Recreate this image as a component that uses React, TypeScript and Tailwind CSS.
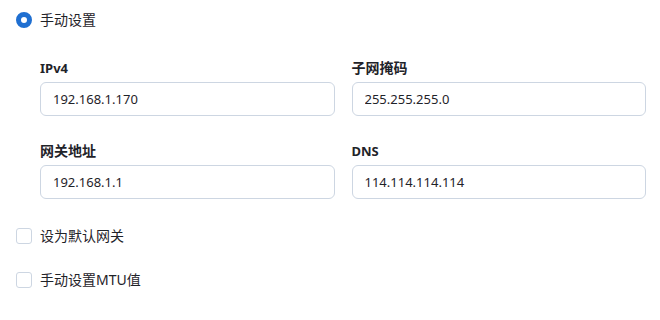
const fields = [
  [
    { label: 'IPv4', value: '192.168.1.170', latin: true },
    { label: '子网掩码', value: '255.255.255.0', latin: false },
  ],
  [
    { label: '网关地址', value: '192.168.1.1', latin: false },
    { label: 'DNS', value: '114.114.114.114', latin: true },
  ],
];

const font = { fontFamily: '"Noto Sans", "Noto Sans CJK SC", sans-serif' };

export default function App() {
  return (
    <div className="w-[660px] h-[320px] bg-white text-[14px] text-[#1f2329]" style={font}>
      <div className="pl-4 pt-3">
        <label className="flex items-center gap-2 h-4">
          <span className="w-4 h-4 rounded-full border-[5px] border-[#1f6fd1] bg-white" />
          <span className="leading-none">手动设置</span>
        </label>
      </div>

      <div className="pl-10 pr-[14px] pt-8 flex flex-col gap-[27px]">
        {fields.map((row, i) => (
          <div key={i} className="grid grid-cols-2 gap-[17px]">
            {row.map((f) => (
              <div key={f.label} className="flex flex-col gap-[6px]">
                <div
                  className={
                    f.latin
                      ? 'font-bold text-[13px] leading-[16px] text-[#1f2329]'
                      : 'font-bold text-[14px] leading-[16px] text-[#1f2329]'
                  }
                >
                  {f.label}
                </div>
                <input
                  readOnly
                  value={f.value}
                  className="h-[34px] w-full rounded-md border border-[#cdd6e2] px-3 text-[13px] text-[#1f2329] outline-none"
                  style={font}
                />
              </div>
            ))}
          </div>
        ))}
      </div>

      <div className="pl-4 pt-[29px] flex flex-col gap-[28px]">
        {['设为默认网关', '手动设置MTU值'].map((t) => (
          <label key={t} className="flex items-center gap-2 h-4">
            <span className="w-4 h-4 rounded-[3px] border border-[#cdd6e2] bg-white" />
            <span className="leading-none">{t}</span>
          </label>
        ))}
      </div>
    </div>
  );
}
